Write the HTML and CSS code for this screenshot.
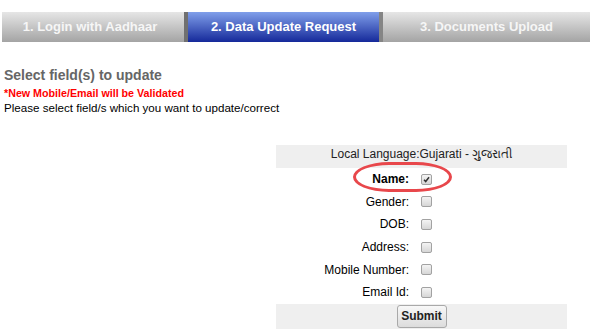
FILE: index.html
```html
<!DOCTYPE html>
<html lang="en">
  <head>
    <meta charset="UTF-8" />
    <title>Data Update Request</title>
    <link rel="stylesheet" href="styles.css">
  </head>
  <body>
    <div class="steps">
      <div class="step first">1. Login with Aadhaar</div>
      <div class="step active">2. Data Update Request</div>
      <div class="step last">3. Documents Upload</div>
    </div>

    <div class="intro">
      <h3>Select field(s) to update</h3>
      <p class="note">*New Mobile/Email will be Validated</p>
      <p class="hint">Please select field/s which you want to update/correct</p>
    </div>

    <div class="fields">
      <table>
        <tr>
          <td class="lang" colspan="2">Local Language:Gujarati - ગુજરાતી</td>
        </tr>
        <tr>
          <td class="label bold">Name:</td>
          <td><span class="box checked"><svg viewBox="0 0 10 10"><path d="M2.3 5.2 L4.1 7.2 L7.8 2.6" fill="none" stroke="#333" stroke-width="1.7"/></svg></span></td>
        </tr>
        <tr>
          <td class="label">Gender:</td>
          <td><span class="box"></span></td>
        </tr>
        <tr>
          <td class="label">DOB:</td>
          <td><span class="box"></span></td>
        </tr>
        <tr>
          <td class="label">Address:</td>
          <td><span class="box"></span></td>
        </tr>
        <tr>
          <td class="label">Mobile Number:</td>
          <td><span class="box"></span></td>
        </tr>
        <tr>
          <td class="label">Email Id:</td>
          <td><span class="box"></span></td>
        </tr>
        <tr>
          <td class="actions" colspan="2"><button>Submit</button></td>
        </tr>
      </table>
      <div class="marker"></div>
    </div>
  </body>
</html>
```

FILE: styles.css
```css
body {
  font-family: "Liberation Sans", Arial, sans-serif;
  background-color: #fff;
  color: #000;
  margin: 0;
  padding: 0;
}

.steps {
  display: flex;
  height: 30px;
  margin: 12px 2px 0;
}

.step {
  line-height: 30px;
  font-size: 13px;
  font-weight: bold;
  text-align: center;
  color: #f6f6f6;
  background: linear-gradient(#e6e6e6, #a4a4a4);
}

.step.first {
  width: 176px;
  padding-right: 6px;
}

.step.active {
  width: 191px;
  color: #fff;
  background: linear-gradient(#809fea, #15299a);
  border-left: 4px solid #707070;
}

.step.last {
  flex: 1;
  border-left: 4px solid #858585;
}

.intro {
  padding-left: 4px;
  margin-top: 24px;
}

.intro h3 {
  margin: 0 0 2px;
  font-size: 14px;
  line-height: 18px;
  color: #666;
}

.intro p {
  margin: 0;
  line-height: 14px;
}

.note {
  font-size: 10.7px;
  font-weight: bold;
  color: #f00;
}

.hint {
  margin-top: 1px !important;
  font-size: 11.6px;
}

.fields {
  position: relative;
  width: 291px;
  margin: 30px 0 0 276px;
}

table {
  width: 291px;
  border-collapse: collapse;
  font-size: 12px;
}

td {
  padding: 0;
  height: 22.6px;
  vertical-align: middle;
}

td.lang {
  height: 22px;
  padding-top: 1px;
  vertical-align: top;
  line-height: 16px;
  text-align: center;
  color: #222;
  background-color: #efefef;
}

td.label {
  width: 133px;
  padding-right: 5px;
  text-align: right;
}

td.bold {
  font-weight: bold;
}

.box {
  display: block;
  width: 9px;
  height: 9px;
  margin-left: 7px;
  border: 1px solid #a2a2a2;
  border-radius: 2px;
  background: linear-gradient(#f4f4f4, #d6d6d6);
}

.box svg {
  display: block;
  width: 9px;
  height: 9px;
}

td.actions {
  height: 27px;
  padding-top: 1px;
  vertical-align: top;
  text-align: center;
  background-color: #efefef;
}

button {
  width: 50px;
  height: 23px;
  padding: 0;
  font-family: "Liberation Sans", Arial, sans-serif;
  font-size: 12px;
  font-weight: bold;
  color: #222;
  border: 1px solid #a9a9a9;
  border-radius: 3px;
  background: linear-gradient(#f8f8f8, #dcdcdc);
}

.marker {
  position: absolute;
  left: 77px;
  top: 17px;
  width: 93px;
  height: 24px;
  border: 3px solid #e8474b;
  border-radius: 36px / 15px;
}
```
